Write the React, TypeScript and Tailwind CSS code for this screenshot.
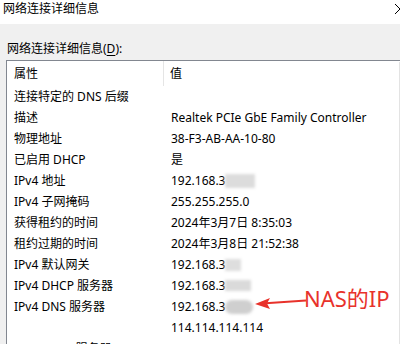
export default function App() {
  const rows: { k: string; v: string; blur?: 'box' | 'short' | 'mid' | 'blob' }[] = [
    { k: '连接特定的 DNS 后缀', v: '' },
    { k: '描述', v: 'Realtek PCIe GbE Family Controller' },
    { k: '物理地址', v: '38-F3-AB-AA-10-80' },
    { k: '已启用 DHCP', v: '是' },
    { k: 'IPv4 地址', v: '192.168.3', blur: 'box' },
    { k: 'IPv4 子网掩码', v: '255.255.255.0' },
    { k: '获得租约的时间', v: '2024年3月7日 8:35:03' },
    { k: '租约过期的时间', v: '2024年3月8日 21:52:38' },
    { k: 'IPv4 默认网关', v: '192.168.3', blur: 'short' },
    { k: 'IPv4 DHCP 服务器', v: '192.168.3', blur: 'mid' },
    { k: 'IPv4 DNS 服务器', v: '192.168.3', blur: 'blob' },
    { k: '', v: '114.114.114.114' },
    { k: 'IPv4 WINS 服务器', v: '' },
  ]

  return (
    <div className="relative w-[400px] h-[344px] overflow-hidden bg-[#f0f0f0] text-[12px] text-black font-['Noto_Sans','Noto_Sans_CJK_SC',sans-serif]">
      <div className="relative h-[24px] bg-white pl-[3px] leading-[18px]">
        网络连接详细信息
        <svg className="absolute right-[-6px] top-[3px]" width="12" height="12" viewBox="0 0 12 12">
          <path d="M1 1 L11 11 M11 1 L1 11" stroke="#000" strokeWidth="1" fill="none" />
        </svg>
      </div>

      <div className="h-[36px] pl-[7px] pt-[17px] leading-[16px]">
        网络连接详细信息(<span className="underline underline-offset-2">D</span>):
      </div>

      <div className="ml-[6px] h-[300px] bg-white border-t border-l border-[#828790]">
        <div className="flex h-[25px] items-center">
          <div className="w-[157px] pl-[7px] h-full flex items-center border-r border-[#e5e5e5]">属性</div>
          <div className="pl-[6px]">值</div>
        </div>
        {rows.map((r, i) => (
          <div key={i} className="flex h-[21px] items-center leading-[21px] whitespace-nowrap">
            <div className="w-[157px] pl-[7px]">{r.k}</div>
            <div className="pl-[7px] flex items-center">
              {r.v}
              {r.blur === 'box' && <span className="inline-block w-[30px] h-[14px] bg-[#dcdcdc] blur-[1.5px]" />}
              {r.blur === 'short' && <span className="inline-block w-[16px] h-[12px] bg-[#dedede] blur-[1.5px]" />}
              {r.blur === 'mid' && <span className="inline-block w-[26px] h-[11px] bg-[#dadada] blur-[1.5px]" />}
              {r.blur === 'blob' && <span className="inline-block w-[28px] h-[14px] rounded-full bg-[#cfcfcf] blur-[1.5px]" />}
            </div>
          </div>
        ))}
      </div>

      <div className="absolute right-0 top-[62px] w-px h-[290px] bg-[#e3e3e3]" />

      <svg className="absolute left-[252px] top-[294px]" width="56" height="18" viewBox="0 0 56 18">
        <path d="M54 6.5 L10 9.5" stroke="#e8322b" strokeWidth="2" fill="none" />
        <path d="M3 10 L18 4 L15 9.5 L18 15 Z" fill="#e8322b" />
      </svg>
      <div className="absolute left-[304px] top-[284px] text-[22px] leading-[28px] text-[#e8322b]">
        NAS的IP
      </div>
    </div>
  )
}
